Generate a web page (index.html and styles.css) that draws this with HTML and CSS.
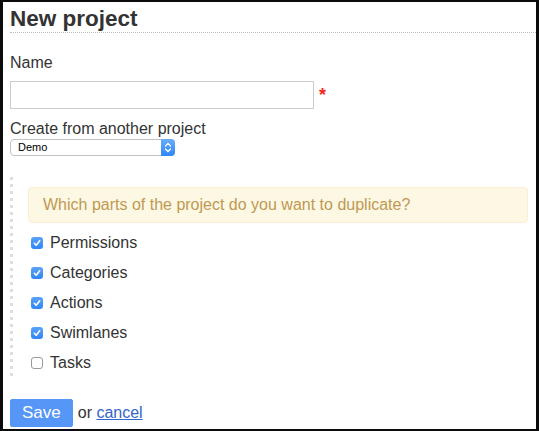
FILE: index.html
```html
<!DOCTYPE html>
<html lang="en">
<head>
<meta charset="utf-8">
<title>New project</title>
<link rel="stylesheet" href="styles.css">
</head>
<body>
<div class="popover">
  <div class="page-header">
    <h2>New project</h2>
  </div>
  <form class="project-form">
    <label class="field-label" for="name">Name</label>
    <div class="input-row">
      <input class="text-input" id="name" type="text">
      <span class="required">*</span>
    </div>
    <label class="field-label second" for="src">Create from another project</label>
    <div class="select-wrap">
      <select class="select" id="src">
        <option>Demo</option>
      </select>
      <span class="select-arrows">
        <svg width="14" height="17" viewBox="0 0 14 17"><path d="M4.5 7 L7 4.5 L9.5 7 M4.5 10 L7 12.5 L9.5 10" fill="none" stroke="#fff" stroke-width="1.3" stroke-linecap="round" stroke-linejoin="round"/></svg>
      </span>
    </div>
    <div class="duplicate-box">
      <p class="alert">Which parts of the project do you want to duplicate?</p>
      <label class="check-row"><span class="check on"><svg width="12" height="12" viewBox="0 0 12 12"><path d="M3.3 6.3 L5.2 8.2 L8.7 3.8" fill="none" stroke="#fff" stroke-width="1.6" stroke-linecap="round" stroke-linejoin="round"/></svg></span>Permissions</label>
      <label class="check-row"><span class="check on"><svg width="12" height="12" viewBox="0 0 12 12"><path d="M3.3 6.3 L5.2 8.2 L8.7 3.8" fill="none" stroke="#fff" stroke-width="1.6" stroke-linecap="round" stroke-linejoin="round"/></svg></span>Categories</label>
      <label class="check-row"><span class="check on"><svg width="12" height="12" viewBox="0 0 12 12"><path d="M3.3 6.3 L5.2 8.2 L8.7 3.8" fill="none" stroke="#fff" stroke-width="1.6" stroke-linecap="round" stroke-linejoin="round"/></svg></span>Actions</label>
      <label class="check-row"><span class="check on"><svg width="12" height="12" viewBox="0 0 12 12"><path d="M3.3 6.3 L5.2 8.2 L8.7 3.8" fill="none" stroke="#fff" stroke-width="1.6" stroke-linecap="round" stroke-linejoin="round"/></svg></span>Swimlanes</label>
      <label class="check-row"><span class="check"></span>Tasks</label>
    </div>
    <div class="form-actions">
      <button class="btn-save" type="button">Save</button>
      <span class="or">or <a href="#" class="cancel">cancel</a></span>
    </div>
  </form>
</div>
</body>
</html>
```
FILE: styles.css
```css
html, body {
  margin: 0;
  padding: 0;
  background: #fff;
}

body {
  font-family: "Liberation Sans", Arial, sans-serif;
  color: #333;
}

.popover {
  width: 539px;
  height: 431px;
  box-sizing: border-box;
  border-top: 2px solid #0b0b0b;
  border-bottom: 2px solid #0b0b0b;
  border-left: 3px solid #0b0b0b;
  border-right: 3px solid #0b0b0b;
  padding-left: 7px;
  overflow: hidden;
}

.page-header {
  padding-top: 3px;
  border-bottom: 1px dotted #bbb;
}

.page-header h2 {
  margin: 0;
  font-size: 22.5px;
  line-height: 27px;
  font-weight: bold;
  color: #333;
}

.project-form {
  margin: 20px 0 0 0;
}

.field-label {
  display: block;
  font-size: 16px;
  line-height: 20px;
}

.field-label.second {
  margin-top: 10px;
}

.input-row {
  display: flex;
  align-items: center;
  margin-top: 8px;
}

.text-input {
  width: 304px;
  height: 28px;
  box-sizing: border-box;
  border: 1px solid #ccc;
  margin: 0;
  padding: 0 4px;
  font-size: 14px;
  font-family: inherit;
}

.required {
  margin-left: 5px;
  color: #ee2a22;
  font-size: 18px;
  line-height: 18px;
  font-weight: bold;
}

.select-wrap {
  position: relative;
  width: 165px;
  height: 17px;
}

.select {
  -webkit-appearance: none;
  appearance: none;
  display: block;
  width: 165px;
  height: 17px;
  box-sizing: border-box;
  margin: 0;
  border: 1px solid #c2c2c2;
  border-radius: 4px;
  background: #fff;
  padding: 0 0 0 7px;
  font-family: "Liberation Sans", Arial, sans-serif;
  font-size: 11px;
  line-height: 15px;
  color: #000;
}

.select-arrows {
  position: absolute;
  right: 0;
  top: 0;
  width: 14px;
  height: 17px;
  border-radius: 0 4px 4px 0;
  background: linear-gradient(#6aaefb, #2e86f6);
  display: flex;
}

.duplicate-box {
  margin: 21px 0 0 0;
  padding: 10px 8px 5px 15px;
  background-image: linear-gradient(#dedede 0, #dedede 3px, transparent 3px);
  background-size: 3px 7px;
  background-repeat: repeat-y;
  background-position: 0 0;
  padding-left: 18px;
}

.alert {
  margin: 0;
  padding: 8px 14px;
  font-size: 16px;
  line-height: 18px;
  color: #c09853;
  background: #fcf8e3;
  border: 1px solid #fbeed5;
  border-radius: 4px;
}

.check-row {
  display: flex;
  align-items: center;
  height: 20px;
  margin-top: 10px;
  font-size: 16px;
  line-height: 20px;
  color: #333;
}

.check {
  width: 12px;
  height: 12px;
  box-sizing: border-box;
  margin-left: 3px;
  margin-right: 7px;
  border-radius: 3px;
  border: 1px solid #9a9a9a;
  background: #fff;
  display: flex;
}

.check.on {
  border: none;
  background: linear-gradient(#5aa2f9, #2f86f5);
}

.form-actions {
  margin-top: 21px;
  display: flex;
  align-items: baseline;
}

.btn-save {
  height: 28px;
  box-sizing: border-box;
  margin: 0;
  padding: 0 11px;
  border: 1px solid #5596f7;
  border-radius: 2px;
  background: #5596f7;
  color: #fff;
  font-family: "Liberation Sans", Arial, sans-serif;
  font-size: 17px;
  line-height: 26px;
}

.or {
  margin-left: 5px;
  font-size: 16px;
  color: #333;
}

.cancel {
  color: #3366cc;
  text-decoration: underline;
}
```
